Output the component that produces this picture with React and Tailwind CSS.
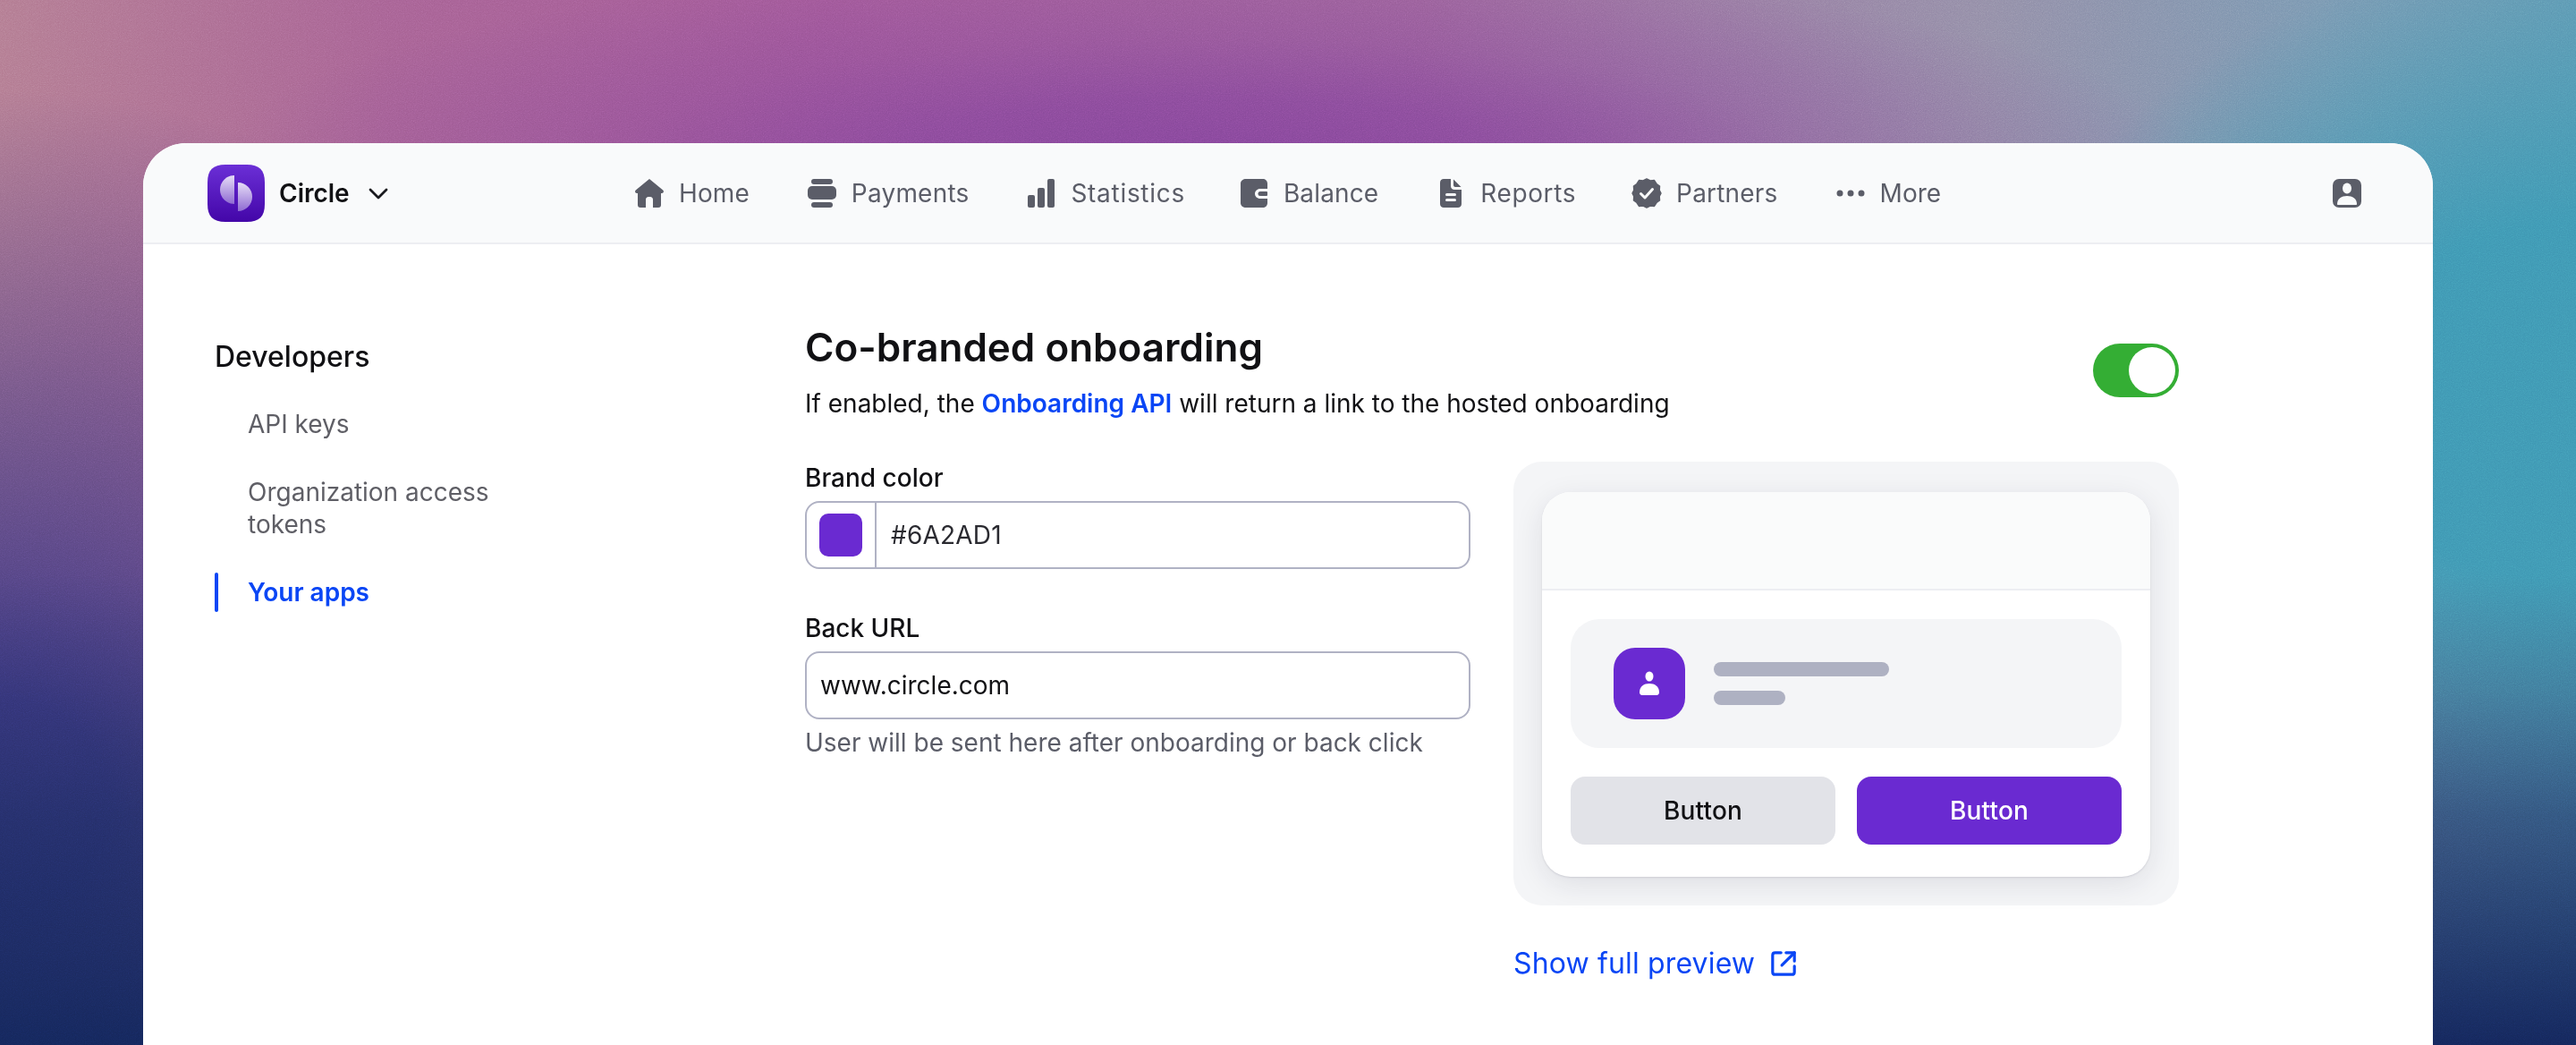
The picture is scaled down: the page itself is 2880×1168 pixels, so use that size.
import React from 'react';

const font = { fontFamily: 'Inter, sans-serif' };

function HomeIcon() {
  return (
    <svg width="36" height="36" viewBox="0 0 36 36" fill="#5B5D68">
      <path d="M18 2 L33.2 14.6 C34.4 15.7 34.2 18 32 18 L31 18 L31 31 C31 33 30 34 28 34 L22 34 L22 25 C22 23.4 20.8 22 19 22 L17 22 C15.2 22 14 23.4 14 25 L14 34 L8 34 C6 34 5 33 5 31 L5 18 L4 18 C1.8 18 1.6 15.7 2.8 14.6 Z" />
    </svg>
  );
}

function PaymentsIcon() {
  return (
    <svg width="36" height="36" viewBox="0 0 36 36" fill="#5B5D68">
      <rect x="6" y="2" width="24" height="6" rx="3" />
      <rect x="2" y="10" width="32" height="15" rx="5" />
      <rect x="6" y="28" width="24" height="6" rx="3" />
    </svg>
  );
}

function StatsIcon() {
  return (
    <svg width="36" height="36" viewBox="0 0 36 36" fill="#5B5D68">
      <rect x="3" y="20" width="8" height="14" rx="2" />
      <rect x="14" y="12" width="8" height="22" rx="2" />
      <rect x="25" y="2" width="8" height="32" rx="2" />
    </svg>
  );
}

function WalletIcon() {
  return (
    <svg width="36" height="36" viewBox="0 0 36 36" fill="#5B5D68">
      <path fillRule="evenodd" d="M9 2 H28 C30.5 2 33 4 33 7 V13 H25 C21.5 13 19 15.5 19 18.5 C19 21.5 21.5 24 25 24 H33 V29 C33 32 30.5 34 28 34 H9 C6 34 3 32 3 29 V7 C3 4 6 2 9 2 Z" />
      <circle cx="25" cy="18.5" r="2.5" />
      <rect x="25" y="16" width="8" height="5" rx="1" />
    </svg>
  );
}

function ReportIcon() {
  return (
    <svg width="36" height="36" viewBox="0 0 36 36">
      <path fill="#5B5D68" d="M10 2 H18 V10 C18 12.5 20 14 22 14 H30 V30 C30 32.5 28 34 26 34 H10 C8 34 6 32.5 6 30 V6 C6 3.5 8 2 10 2 Z" />
      <path fill="#5B5D68" d="M21 2.5 L29.5 11 H23 C22 11 21 10 21 9 Z" />
      <rect x="12" y="18" width="12" height="3" rx="1.5" fill="#F9FAFB" />
      <rect x="12" y="24" width="12" height="3" rx="1.5" fill="#F9FAFB" />
    </svg>
  );
}

function BadgeIcon() {
  return (
    <svg width="36" height="36" viewBox="0 0 36 36">
      <path fill="#5B5D68" d="M18 2 L22 4 L26.5 3.6 L29 7.5 L32.5 10 L32.2 14.5 L34 18 L32.2 21.5 L32.5 26 L29 28.5 L26.5 32.4 L22 32 L18 34 L14 32 L9.5 32.4 L7 28.5 L3.5 26 L3.8 21.5 L2 18 L3.8 14.5 L3.5 10 L7 7.5 L9.5 3.6 L14 4 Z" stroke="#5B5D68" strokeWidth="1.5" strokeLinejoin="round" />
      <path d="M11.5 18.5 L16 23 L24.5 13.5" fill="none" stroke="#F9FAFB" strokeWidth="3" strokeLinecap="round" strokeLinejoin="round" />
    </svg>
  );
}

function DotsIcon() {
  return (
    <svg width="36" height="36" viewBox="0 0 36 36" fill="#5B5D68">
      <circle cx="6" cy="18" r="3.5" />
      <circle cx="18" cy="18" r="3.5" />
      <circle cx="30" cy="18" r="3.5" />
    </svg>
  );
}

function UserIcon() {
  return (
    <svg width="36" height="36" viewBox="0 0 36 36">
      <rect x="2" y="2" width="32" height="32" rx="7" fill="#5B5D68" />
      <ellipse cx="18" cy="12.5" rx="5" ry="6" fill="#F9FAFB" />
      <path d="M7 30 C7 24 12 21 18 21 C24 21 29 24 29 30 C29 30.6 28.6 31 28 31 H8 C7.4 31 7 30.6 7 30 Z" fill="#F9FAFB" />
    </svg>
  );
}

function ExternalIcon() {
  return (
    <svg width="30" height="30" viewBox="0 0 32 32" fill="none" stroke="#0A46F5" strokeWidth="3.4" strokeLinecap="round" strokeLinejoin="round">
      <path d="M13 3 H6 C4 3 3 4 3 6 V26 C3 28 4 29 6 29 H26 C28 29 29 28 29 26 V19" />
      <path d="M19 3 H29 V13" />
      <path d="M29 3 L14 18" />
    </svg>
  );
}

function CircleLogo() {
  return (
    <svg width="64" height="64" viewBox="0 0 64 64">
      <defs>
        <linearGradient id="logoBg" x1="0" y1="0" x2="0" y2="1">
          <stop offset="0" stopColor="#6B2FD6" />
          <stop offset="1" stopColor="#4306A8" />
        </linearGradient>
        <linearGradient id="logoHalf" x1="0" y1="0" x2="0" y2="1">
          <stop offset="0" stopColor="#E6DDF7" />
          <stop offset="1" stopColor="#8F6BD2" />
        </linearGradient>
      </defs>
      <path d="M20 0 H44 C58 0 64 6 64 20 V44 C64 58 58 64 44 64 H20 C6 64 0 58 0 44 V20 C0 6 6 0 20 0 Z" fill="url(#logoBg)" />
      <path d="M30 12 A16 16 0 0 0 30 44 Z" fill="url(#logoHalf)" />
      <path d="M34 20 A16 16 0 0 1 34 52 Z" fill="url(#logoHalf)" />
    </svg>
  );
}

const navItems = [
  { label: 'Home', icon: <HomeIcon />, cls: 'tracking-[0.1px]' },
  { label: 'Payments', icon: <PaymentsIcon />, cls: 'tracking-[0.2px]' },
  { label: 'Statistics', icon: <StatsIcon />, cls: 'tracking-[0.7px] mr-[-4px]' },
  { label: 'Balance', icon: <WalletIcon />, cls: 'tracking-[0.15px]' },
  { label: 'Reports', icon: <ReportIcon />, cls: 'tracking-[0.6px] mr-[-2px]' },
  { label: 'Partners', icon: <BadgeIcon />, cls: 'tracking-[0.2px]' },
  { label: 'More', icon: <DotsIcon />, cls: '' },
];

export default function App() {
  return (
    <div
      style={font}
      className="relative h-[1168px] w-[2880px] overflow-hidden pl-[160px] pr-[160px] pt-[160px] bg-[linear-gradient(180deg,transparent_55%,rgba(20,40,90,0.25)_66%,rgba(20,40,90,0.6)_78%,#14265A_100%),radial-gradient(ellipse_1100px_220px_at_1350px_175px,#84459A_0%,rgba(132,69,154,0.8)_30%,rgba(132,69,154,0.35)_60%,transparent_100%),radial-gradient(ellipse_650px_500px_at_2880px_450px,#3E96B2_0%,#3E96B2_40%,rgba(62,150,178,0.5)_70%,transparent_100%),radial-gradient(ellipse_800px_800px_at_0px_900px,#3F3880_0%,#3F3880_15%,rgba(63,56,128,0.5)_60%,transparent_100%),linear-gradient(90deg,#B27A90_0%,#A66192_15%,#A15896_32%,#9C6399_55%,#9876A0_65%,#928CA6_77%,#7896B0_90%,#6298B2_100%)]"
    >
      <svg className="absolute inset-0 opacity-30 mix-blend-overlay" width="2880" height="1168">
        <filter id="grain">
          <feTurbulence type="fractalNoise" baseFrequency="0.9" numOctaves="2" stitchTiles="stitch" />
          <feColorMatrix type="saturate" values="0" />
        </filter>
        <rect width="2880" height="1168" filter="url(#grain)" />
      </svg>

      <div className="relative h-[1008px] rounded-t-[48px] bg-white">
        <header className="flex h-[113px] items-center rounded-t-[48px] border-b-2 border-[#EDEEF2] bg-[#F9FAFB] pl-[72px] pr-[78px]">
          <div className="flex w-[476px] items-center">
            <CircleLogo />
            <span className="ml-4 text-[28px] font-semibold text-[#111114]">Circle</span>
            <svg className="ml-[20px]" width="24" height="24" viewBox="0 0 24 24" fill="none" stroke="#1A1A1F" strokeWidth="2.8" strokeLinecap="round" strokeLinejoin="round">
              <path d="M3 8 L12 17 L21 8" />
            </svg>
          </div>
          <nav className="flex flex-1 items-center gap-[63px]">
            {navItems.map((item) => (
              <a key={item.label} className={`flex items-center gap-[15px] text-[28px] text-[#5B5D68] ${item.cls}`}>
                {item.icon}
                {item.label}
              </a>
            ))}
          </nav>
          <UserIcon />
        </header>

        <div className="flex pl-[80px] pt-[87px]">
          <aside className="w-[660px] shrink-0">
            <h2 className="mt-[13px] text-[32px] font-medium leading-[52px] text-[#111114]">Developers</h2>
            <ul className="mt-[31px] w-[340px] text-[28px] leading-[36px] text-[#5F5F66]">
              <li className="pl-[37px]">API keys</li>
              <li className="mt-[40px] pl-[37px]">Organization access tokens</li>
              <li className="relative mt-[40px] pl-[37px] font-semibold text-[#0A46F5]">
                <span className="absolute left-0 top-[-4px] h-[44px] w-[4px] rounded-full bg-[#0A46F5]" />
                Your apps
              </li>
            </ul>
          </aside>

          <main className="w-[1536px]">
            <div className="flex items-center justify-between">
              <div>
                <h1 className="text-[44px] font-semibold leading-[56px] text-[#111114]">Co-branded onboarding</h1>
                <p className="mt-[17px] text-[28px] leading-[36px] text-[#111114]">
                  If enabled, the <span className="font-semibold text-[#0A46F5]">Onboarding API</span> will return a link to the hosted onboarding
                </p>
              </div>
              <div className="mb-[1px] flex h-[60px] w-[96px] items-center justify-end rounded-full bg-[#34AE34] pr-1">
                <div className="h-[52px] w-[52px] rounded-full bg-white" />
              </div>
            </div>

            <div className="mt-[47px] flex gap-[48px]">
              <div className="w-[744px] shrink-0">
                <label className="block text-[28px] font-medium leading-[36px] text-[#111114]">Brand color</label>
                <div className="mt-[8px] flex h-[76px] items-center rounded-[16px] border-2 border-[#B0B2C4]">
                  <div className="flex h-full w-[78px] items-center justify-center border-r-2 border-[#B0B2C4]">
                    <div className="h-[48px] w-[48px] rounded-[10px] bg-[#6A2AD1]" />
                  </div>
                  <span className="pl-4 text-[28px] tracking-[0.2px] text-[#2A2A30]">#6A2AD1</span>
                </div>
                <label className="mt-[48px] block text-[28px] font-medium leading-[36px] text-[#111114]">Back URL</label>
                <div className="mt-[8px] flex h-[76px] items-center rounded-[16px] border-2 border-[#B0B2C4] pl-[15px] text-[28px] text-[#111114]">
                  www.circle.com
                </div>
                <p className="mt-[8px] text-[28px] leading-[36px] text-[#5B5D68]">User will be sent here after onboarding or back click</p>
              </div>

              <div className="flex-1">
                <div className="rounded-[32px] bg-[#F4F5F7] px-[32px] pb-[32px] pt-[34px]">
                  <div className="rounded-[32px] bg-white shadow-[0_8px_32px_rgba(30,30,60,0.10),0_1px_2px_rgba(30,30,60,0.12)]">
                    <div className="h-[110px] rounded-t-[32px] border-b-2 border-[#EDEEF2] bg-[#FAFBFB]" />
                    <div className="px-[32px] pb-[36px] pt-[32px]">
                      <div className="flex h-[144px] items-center gap-[32px] rounded-[32px] bg-[#F4F5F7] pl-[48px]">
                        <div className="flex h-[80px] w-[80px] items-center justify-center rounded-[24px] bg-[#6A2AD1]">
                          <svg width="24" height="28" viewBox="0 0 24 28" fill="#fff">
                            <ellipse cx="12" cy="6" rx="4.5" ry="5.5" />
                            <path d="M1 24 C1 17 6 14 12 14 C18 14 23 17 23 24 C23 25.5 22 27 20 27 H4 C2 27 1 25.5 1 24 Z" />
                          </svg>
                        </div>
                        <div className="flex flex-col gap-[16px]">
                          <div className="h-[16px] w-[196px] rounded-full bg-[#AEB1C2]" />
                          <div className="h-[16px] w-[80px] rounded-full bg-[#AEB1C2]" />
                        </div>
                      </div>
                      <div className="mt-[32px] flex gap-[24px]">
                        <div className="flex h-[76px] flex-1 items-center justify-center rounded-[16px] bg-[#E2E3E8] text-[28px] font-medium tracking-[0.2px] text-[#111114]">Button</div>
                        <div className="flex h-[76px] flex-1 items-center justify-center rounded-[16px] bg-[#6A2AD1] text-[28px] font-medium tracking-[0.2px] text-white">Button</div>
                      </div>
                    </div>
                  </div>
                </div>
                <a className="mt-[45px] flex items-center gap-[17px] text-[32px] leading-[40px] tracking-[0.15px] text-[#0A46F5]">
                  Show full preview
                  <ExternalIcon />
                </a>
              </div>
            </div>
          </main>
        </div>
      </div>
    </div>
  );
}
